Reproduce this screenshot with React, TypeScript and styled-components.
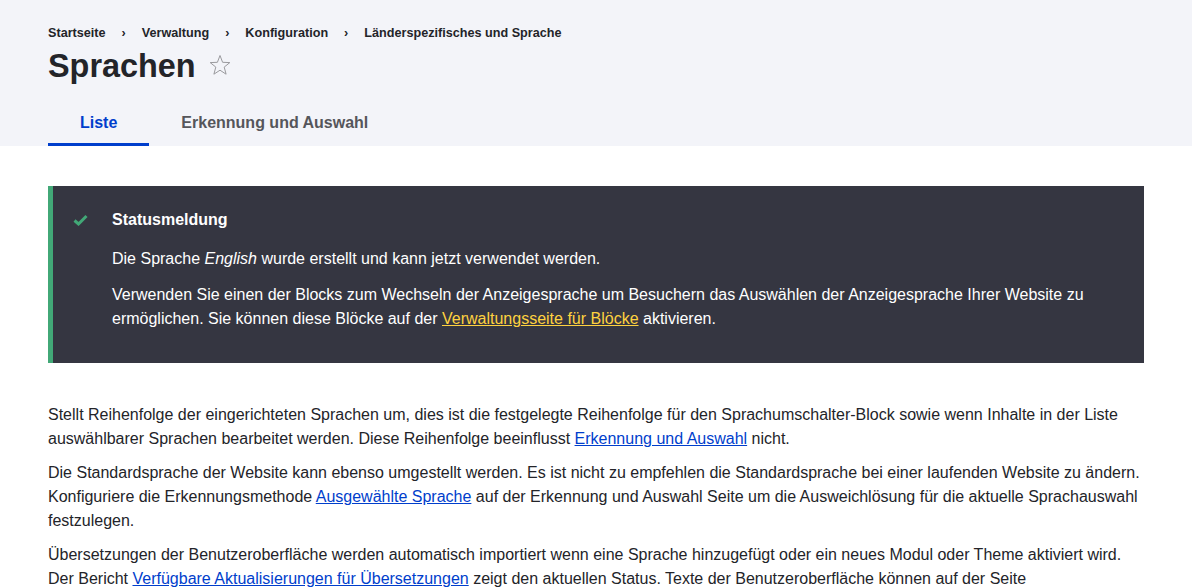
import React from "react";
import styled, { createGlobalStyle } from "styled-components";

const Global = createGlobalStyle`
  html, body { margin: 0; padding: 0; background: #fff; }
  body {
    font-family: "Liberation Sans", Arial, sans-serif;
    color: #232429;
    font-size: 16px;
    line-height: 24px;
  }
  * { box-sizing: border-box; }
`;

const Header = styled.header`
  background: #f3f4f9;
  padding: 25px 48px 0;
`;

const Breadcrumb = styled.nav`
  display: flex;
  align-items: center;
  font-size: 12.64px;
  line-height: 16px;
  font-weight: 700;
  color: #232429;
`;

const Crumb = styled.a`
  color: inherit;
  text-decoration: none;
`;

const Sep = styled.span`
  margin: 0 16px;
`;

const TitleRow = styled.div`
  display: flex;
  align-items: center;
  margin-top: 5px;
  height: 40px;
`;

const Title = styled.h1`
  margin: 0;
  font-size: 32.4px;
  line-height: 40px;
  font-weight: 700;
  color: #232429;
`;

const StarButton = styled.span`
  display: inline-flex;
  margin-left: 12px;
  margin-top: -2px;
`;

const Tabs = styled.ul`
  display: flex;
  list-style: none;
  margin: 12px 0 0;
  padding: 0;
`;

const Tab = styled.li<{ $active?: boolean }>`
  position: relative;
  height: 48px;
  display: flex;
  align-items: center;
  padding: 2px 32px 0;
  font-weight: 700;
  font-size: 16px;
  color: ${(p) => (p.$active ? "#003ecc" : "#55565b")};
  &::after {
    content: "";
    display: ${(p) => (p.$active ? "block" : "none")};
    position: absolute;
    left: 0;
    right: 0;
    bottom: 0;
    height: 3px;
    background: #003ecc;
  }
`;

const Main = styled.main`
  padding: 40px 48px 0;
`;

const Message = styled.div`
  background: #353641;
  border-left: 5px solid #42a877;
  color: #fff;
  padding: 22px 24px 32px 20px;
  display: grid;
  grid-template-columns: 39px 1fr;
  margin-bottom: 40px;
`;

const IconCell = styled.div`
  display: flex;
  align-items: center;
  height: 24px;
`;

const MessageTitle = styled.h2`
  margin: 0 0 15px;
  font-size: 16px;
  line-height: 24px;
  font-weight: 700;
`;

const MessageBody = styled.div`
  grid-column: 2;
`;

const MessageText = styled.p`
  margin: 0 0 12px;
  &:last-child { margin-bottom: 0; }
`;

const MessageLink = styled.a`
  color: #ffd23f;
  text-decoration: underline;
`;

const Para = styled.p`
  margin: 0 0 10px;
`;

const Link = styled.a`
  color: #003ecc;
  text-decoration: underline;
`;

const Star = () => (
  <svg width="24" height="23" viewBox="0 0 24 23" aria-hidden="true">
    <polygon
      points="12,1.5 14.6,8.3 21.8,8.6 16.2,13.1 18.1,20.2 12,16.2 5.9,20.2 7.8,13.1 2.2,8.6 9.4,8.3"
      fill="none"
      stroke="#9a9a9e"
      strokeWidth="1"
      strokeLinejoin="miter"
    />
  </svg>
);

const Check = () => (
  <svg width="15" height="12" viewBox="0 0 15 12" aria-hidden="true">
    <polyline
      points="1.5,6.5 5.5,10 13.5,2"
      fill="none"
      stroke="#42a877"
      strokeWidth="3"
      strokeLinecap="butt"
      strokeLinejoin="miter"
    />
  </svg>
);

export default function App() {
  return (
    <>
      <Global />
      <Header>
        <Breadcrumb>
          <Crumb href="#">Startseite</Crumb>
          <Sep>›</Sep>
          <Crumb href="#">Verwaltung</Crumb>
          <Sep>›</Sep>
          <Crumb href="#">Konfiguration</Crumb>
          <Sep>›</Sep>
          <Crumb href="#">Länderspezifisches und Sprache</Crumb>
        </Breadcrumb>
        <TitleRow>
          <Title>Sprachen</Title>
          <StarButton>
            <Star />
          </StarButton>
        </TitleRow>
        <Tabs>
          <Tab $active>Liste</Tab>
          <Tab>Erkennung und Auswahl</Tab>
        </Tabs>
      </Header>
      <Main>
        <Message role="status">
          <IconCell>
            <Check />
          </IconCell>
          <MessageTitle>Statusmeldung</MessageTitle>
          <MessageBody>
            <MessageText>
              Die Sprache <em>English</em> wurde erstellt und kann jetzt verwendet werden.
            </MessageText>
            <MessageText>
              Verwenden Sie einen der Blocks zum Wechseln der Anzeigesprache um Besuchern das
              Auswählen der Anzeigesprache Ihrer Website zu ermöglichen. Sie können diese Blöcke auf
              der <MessageLink href="#">Verwaltungsseite für Blöcke</MessageLink> aktivieren.
            </MessageText>
          </MessageBody>
        </Message>
        <Para>
          Stellt Reihenfolge der eingerichteten Sprachen um, dies ist die festgelegte Reihenfolge für
          den Sprachumschalter-Block sowie wenn Inhalte in der Liste auswählbarer Sprachen bearbeitet
          werden. Diese Reihenfolge beeinflusst <Link href="#">Erkennung und Auswahl</Link> nicht.
        </Para>
        <Para>
          Die Standardsprache der Website kann ebenso umgestellt werden. Es ist nicht zu empfehlen die
          Standardsprache bei einer laufenden Website zu ändern. Konfiguriere die Erkennungsmethode{" "}
          <Link href="#">Ausgewählte Sprache</Link> auf der Erkennung und Auswahl Seite um die
          Ausweichlösung für die aktuelle Sprachauswahl festzulegen.
        </Para>
        <Para>
          Übersetzungen der Benutzeroberfläche werden automatisch importiert wenn eine Sprache
          hinzugefügt oder ein neues Modul oder Theme aktiviert wird. Der Bericht{" "}
          <Link href="#">Verfügbare Aktualisierungen für Übersetzungen</Link> zeigt den aktuellen
          Status. Texte der Benutzeroberfläche können auf der Seite{" "}
          <Link href="#">Benutzeroberfläche übersetzen</Link> angepasst werden.
        </Para>
      </Main>
    </>
  );
}
